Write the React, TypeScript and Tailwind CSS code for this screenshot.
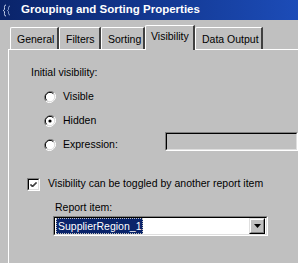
import React from "react";

const font = { fontFamily: '"Liberation Sans", Arial, sans-serif' };

const tabs = [
  { label: "General", w: "w-[49px]" },
  { label: "Filters", w: "w-[42px]" },
  { label: "Sorting", w: "w-[44px]" },
  { label: "Visibility", w: "w-[50px]", active: true },
  { label: "Data Output", w: "w-[68px]" },
];

// classic sunken 3d radio
const Radio = ({ checked }: { checked?: boolean }) => (
  <svg width="12" height="12" viewBox="0 0 12 12" className="shrink-0">
    <path d="M10.2 1.8 A6 6 0 0 0 1.8 10.2" fill="none" stroke="#808080" strokeWidth="1" />
    <path d="M1.8 10.2 A6 6 0 0 0 10.2 1.8" fill="none" stroke="#ffffff" strokeWidth="1" />
    <circle cx="6" cy="6" r="4.6" fill="#ffffff" />
    <path d="M9.3 2.7 A4.6 4.6 0 0 0 2.7 9.3" fill="none" stroke="#000000" strokeWidth="1" />
    <path d="M2.7 9.3 A4.6 4.6 0 0 0 9.3 2.7" fill="none" stroke="#dfdfdf" strokeWidth="1" />
    {checked && <circle cx="6" cy="6" r="1.6" fill="#000000" />}
  </svg>
);

const Sunken = ({ className, children }: { className?: string; children?: React.ReactNode }) => (
  <div className={`border border-t-[#808080] border-l-[#808080] border-b-white border-r-white ${className ?? ""}`}>
    <div className="h-full w-full border border-t-black border-l-black border-b-[#dfdfdf] border-r-[#dfdfdf]">
      {children}
    </div>
  </div>
);

export default function App() {
  return (
    <div className="w-[298px] h-[263px] bg-[#c0c0c0] overflow-hidden flex flex-col text-[10.5px] text-black whitespace-nowrap" style={font}>
      {/* title bar */}
      <div className="h-[20px] shrink-0 flex items-center bg-gradient-to-r from-[#0a246a] to-[#1c4cb8]">
        <svg width="10" height="13" viewBox="0 0 10 13" className="ml-[2px]">
          <path d="M4 1 C2 1 2.5 3 2.5 5 C2.5 6 1.5 6.5 1 6.5 C1.5 6.5 2.5 7 2.5 8 C2.5 10 2 12 4 12" fill="none" stroke="#c8d4ec" strokeWidth="1" />
          <path d="M8 2 C6.5 2 6.5 4 6.5 5 C6.5 6 5.8 6.5 5.3 6.5 C5.8 6.5 6.5 7 6.5 8 C6.5 9 6.5 11 8 11" fill="none" stroke="#8fa4d0" strokeWidth="1" />
        </svg>
        <span className="ml-[9px] text-white font-bold text-[11.5px]">Grouping and Sorting Properties</span>
      </div>

      {/* tab row */}
      <div className="h-[29px] shrink-0 flex items-end pl-[10px]">
        {tabs.map((t) =>
          t.active ? (
            <div
              key={t.label}
              className={`${t.w} h-[25px] -mb-px relative z-10 bg-[#c0c0c0] border-t border-l border-white border-r-2 border-r-[#404040] rounded-tl-[2px] flex items-start pt-[3px] pl-[5px]`}
            >
              {t.label}
            </div>
          ) : (
            <div
              key={t.label}
              className={`${t.w} h-[22px] border-t border-l border-white border-r-2 border-r-[#404040] rounded-tl-[2px] flex items-start pt-[4px] pl-[6px]`}
            >
              {t.label}
            </div>
          )
        )}
      </div>

      {/* panel */}
      <div className="flex-1 ml-[8px] border-t border-l border-white flex flex-col">
        <div className="mt-[15px] pl-[22px] h-[14px] leading-[14px]">Initial visibility:</div>
        <div className="mt-[6px] pl-[35px] flex flex-col">
          <div className="h-[24px] flex items-center gap-[7px]">
            <Radio />
            <span>Visible</span>
          </div>
          <div className="h-[24px] flex items-center gap-[7px]">
            <Radio checked />
            <span>Hidden</span>
          </div>
          <div className="h-[24px] flex items-center gap-[7px]">
            <Radio />
            <span className="w-[95px]">Expression:</span>
            <Sunken className="self-start -mt-px h-[19px] flex-1 bg-[#c0c0c0]" />
          </div>
        </div>

        <div className="mt-[17px] pl-[18px] h-[20px] flex items-center gap-[8px]">
          <Sunken className="w-[13px] h-[13px] shrink-0">
            <div className="h-full w-full bg-white flex items-center justify-center">
              <svg width="7" height="7" viewBox="0 0 7 7">
                <path d="M0.5 3 L2.5 5 L6.5 1 M0.5 4 L2.5 6 L6.5 2" fill="none" stroke="#000" strokeWidth="1" />
              </svg>
            </div>
          </Sunken>
          <span>Visibility can be toggled by another report item</span>
        </div>

        <div className="mt-[6px] pl-[46px] h-[14px] leading-[14px]">Report item:</div>
        <div className="mt-[2px] ml-[44px]">
          <Sunken className="w-[215px] h-[20px]">
            <div className="h-full w-full bg-white flex items-center pl-px pr-px">
              <span className="bg-[#0a246a] text-white leading-[14px] px-[1px] border border-dotted border-[#c0c0c0]">SupplierRegion_1</span>
              <div className="ml-auto w-[16px] h-[16px] bg-[#c0c0c0] border border-t-[#dfdfdf] border-l-[#dfdfdf] border-b-black border-r-black">
                <div className="h-full w-full border border-t-white border-l-white border-b-[#808080] border-r-[#808080] flex items-center justify-center">
                  <svg width="7" height="4" viewBox="0 0 7 4">
                    <path d="M0 0 H7 L3.5 4 Z" fill="#000" />
                  </svg>
                </div>
              </div>
            </div>
          </Sunken>
        </div>
      </div>
    </div>
  );
}
